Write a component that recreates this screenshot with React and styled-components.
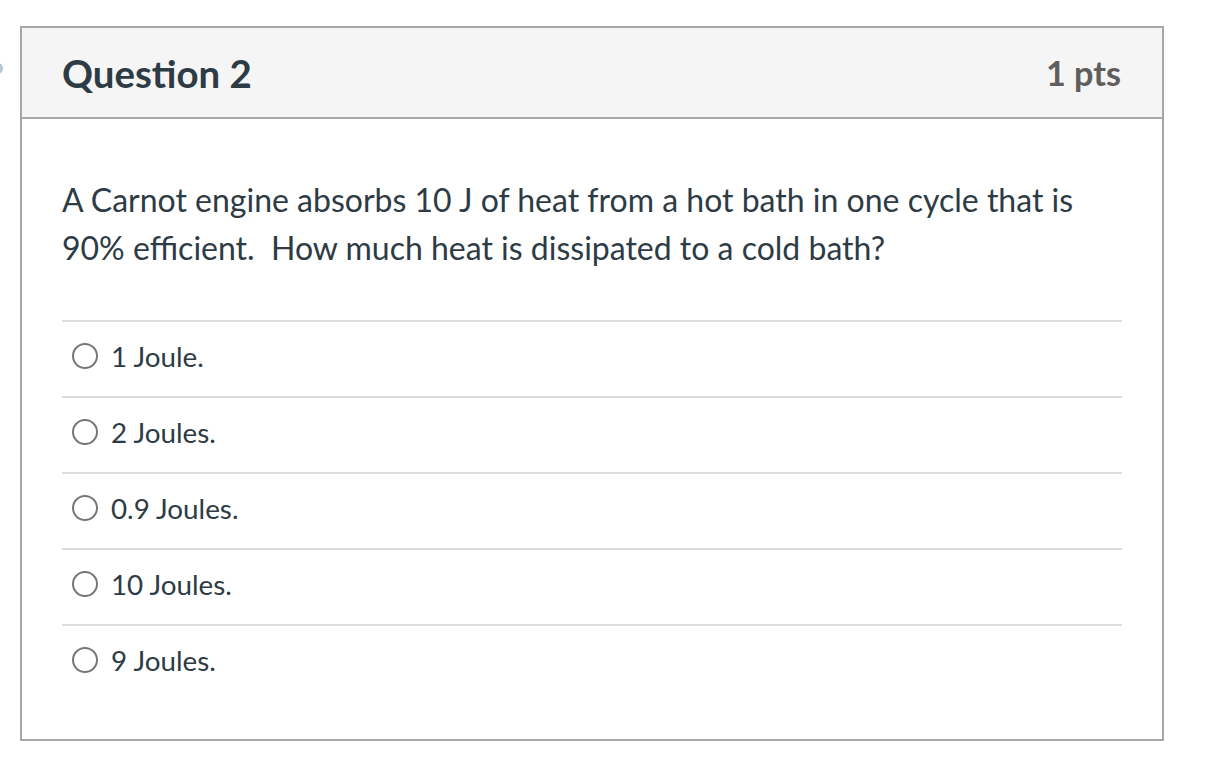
import styled, { createGlobalStyle } from "styled-components";

const GlobalStyle = createGlobalStyle`
  html, body {
    margin: 0;
    padding: 0;
    background: #ffffff;
  }
  body {
    font-family: Lato, "Open Sans", "Liberation Sans", sans-serif;
    color: #2d3b45;
  }
`;

const Page = styled.div`
  position: relative;
  width: 1232px;
  height: 770px;
  padding: 26px 0 0 20px;
  box-sizing: border-box;
  overflow: hidden;
`;

// partly hidden marker at the left edge of the page
const EdgeMark = styled.span`
  position: absolute;
  left: -8px;
  top: 63px;
  width: 11px;
  height: 11px;
  border-radius: 50%;
  background: #b7c6d2;
`;

const Card = styled.div`
  width: 1144px;
  border: 2px solid #a8a8a8;
  box-sizing: border-box;
  background: #fff;
`;

// Header
const Header = styled.div`
  display: flex;
  align-items: center;
  justify-content: space-between;
  height: 89px;
  padding: 0 41px 0 40px;
  background: #f5f5f5;
  border-bottom: 2px solid #a8a8a8;
`;

const Title = styled.h2`
  margin: 0;
  font-size: 38.4px;
  font-weight: 700;
  color: #2d3b45;
`;

const Points = styled.div`
  font-size: 34.2px;
  font-weight: 700;
  color: #5e5e5e;
`;

// Body
const Body = styled.div`
  padding: 57px 40px 39px 40px;
`;

const QuestionText = styled.p`
  margin: 0 0 48px;
  font-size: 32px;
  line-height: 48px;
  color: #2d3b45;
`;

const Answers = styled.div`
  display: flex;
  flex-direction: column;
`;

const AnswerRow = styled.label`
  display: flex;
  align-items: center;
  gap: 13px;
  height: 68px;
  padding: 0 0 6px 10px;
  border-top: 2px solid #dedede;
  font-size: 27.8px;
  color: #2d3b45;
`;

const Radio = styled.span`
  width: 22px;
  height: 22px;
  border: 2px solid #777;
  border-radius: 50%;
  flex-shrink: 0;
  background: #fff;
`;

const answers = ["1 Joule.", "2 Joules.", "0.9 Joules.", "10 Joules.", "9 Joules."];

const App = () => {
  return (
    <Page>
      <GlobalStyle />
      <EdgeMark />
      <Card>
        <Header>
          <Title>Question 2</Title>
          <Points>1 pts</Points>
        </Header>
        <Body>
          <QuestionText>
            A Carnot engine absorbs 10 J of heat from a hot bath in one cycle that is
            <br />
            90% efficient.&nbsp; How much heat is dissipated to a cold bath?
          </QuestionText>
          <Answers>
            {answers.map((a) => (
              <AnswerRow key={a}>
                <Radio />
                {a}
              </AnswerRow>
            ))}
          </Answers>
        </Body>
      </Card>
    </Page>
  );
};

export default App;
